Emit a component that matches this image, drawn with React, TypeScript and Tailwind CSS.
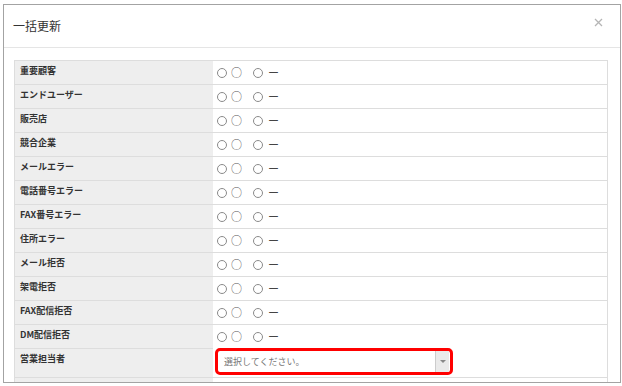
import React from "react";

const rows = [
  "重要顧客",
  "エンドユーザー",
  "販売店",
  "競合企業",
  "メールエラー",
  "電話番号エラー",
  "FAX番号エラー",
  "住所エラー",
  "メール拒否",
  "架電拒否",
  "FAX配信拒否",
  "DM配信拒否",
];

const Radio = () => (
  <span className="inline-block w-[10px] h-[10px] rounded-full border-[1.5px] border-[#8a8a8a] bg-white shrink-0" />
);

const App = () => {
  return (
    <div
      className="w-[622px] h-[386px] bg-white overflow-hidden pt-[4px] pl-[3px]"
      style={{ fontFamily: '"Noto Sans CJK JP", "Liberation Sans", sans-serif' }}
    >
      <div className="w-[618px] h-[379px] border border-[#a3a3a3] flex flex-col overflow-hidden">
        {/* header */}
        <div className="h-[43px] shrink-0 border-b border-[#e5e5e5] flex items-center justify-between pl-[9px] pr-[17px]">
          <h4 className="text-[12px] text-[#333] font-normal leading-none">一括更新</h4>
          <svg width="9" height="9" viewBox="0 0 9 9" className="mb-[7px]">
            <path d="M1 1 L8 8 M8 1 L1 8" stroke="#b5b5b5" strokeWidth="1.3" fill="none" />
          </svg>
        </div>

        {/* body */}
        <div className="pl-[10px] pt-[12px]">
          <div className="w-[594px] border-t border-l border-r border-[#dddddd] text-[9px] text-[#333]">
            {rows.map((label) => (
              <div key={label} className="flex h-[24px] border-b border-[#dddddd]">
                <div className="w-[198px] bg-[#eeeeee] pl-[5px] pt-[4px] font-bold leading-[12px]">
                  {label}
                </div>
                <div className="flex-1 flex items-center pl-[4px] bg-white">
                  <Radio />
                  <span className="ml-[4px] text-[11px] text-[#555] leading-none">○</span>
                  <span className="ml-[11px] flex">
                    <Radio />
                  </span>
                  <span className="ml-[5px] text-[11px] text-[#444] leading-none">ー</span>
                </div>
              </div>
            ))}
            <div className="flex h-[29px] border-b border-[#dddddd]">
              <div className="w-[198px] bg-[#eeeeee] pl-[5px] pt-[4px] font-bold leading-[12px]">
                営業担当者
              </div>
              <div className="flex-1 bg-white pl-[2px] -mt-[1px]">
                <div className="w-[238px] h-[27px] border-[3px] border-[#ff0000] rounded-[5px] flex bg-white overflow-hidden">
                  <div className="flex-1 flex items-center pl-[6px] text-[#777] font-normal">
                    選択してください。
                  </div>
                  <div className="w-[14px] mr-[1px] bg-[#eaeaea] border-l border-[#cccccc] flex items-center justify-center">
                    <span className="w-0 h-0 border-l-[3px] border-r-[3px] border-t-[3px] border-l-transparent border-r-transparent border-t-[#888]" />
                  </div>
                </div>
              </div>
            </div>
            <div className="flex h-[24px] border-b border-[#dddddd]">
              <div className="w-[198px] bg-[#eeeeee]" />
              <div className="flex-1 bg-white" />
            </div>
          </div>
        </div>
      </div>
    </div>
  );
};

export default App;
